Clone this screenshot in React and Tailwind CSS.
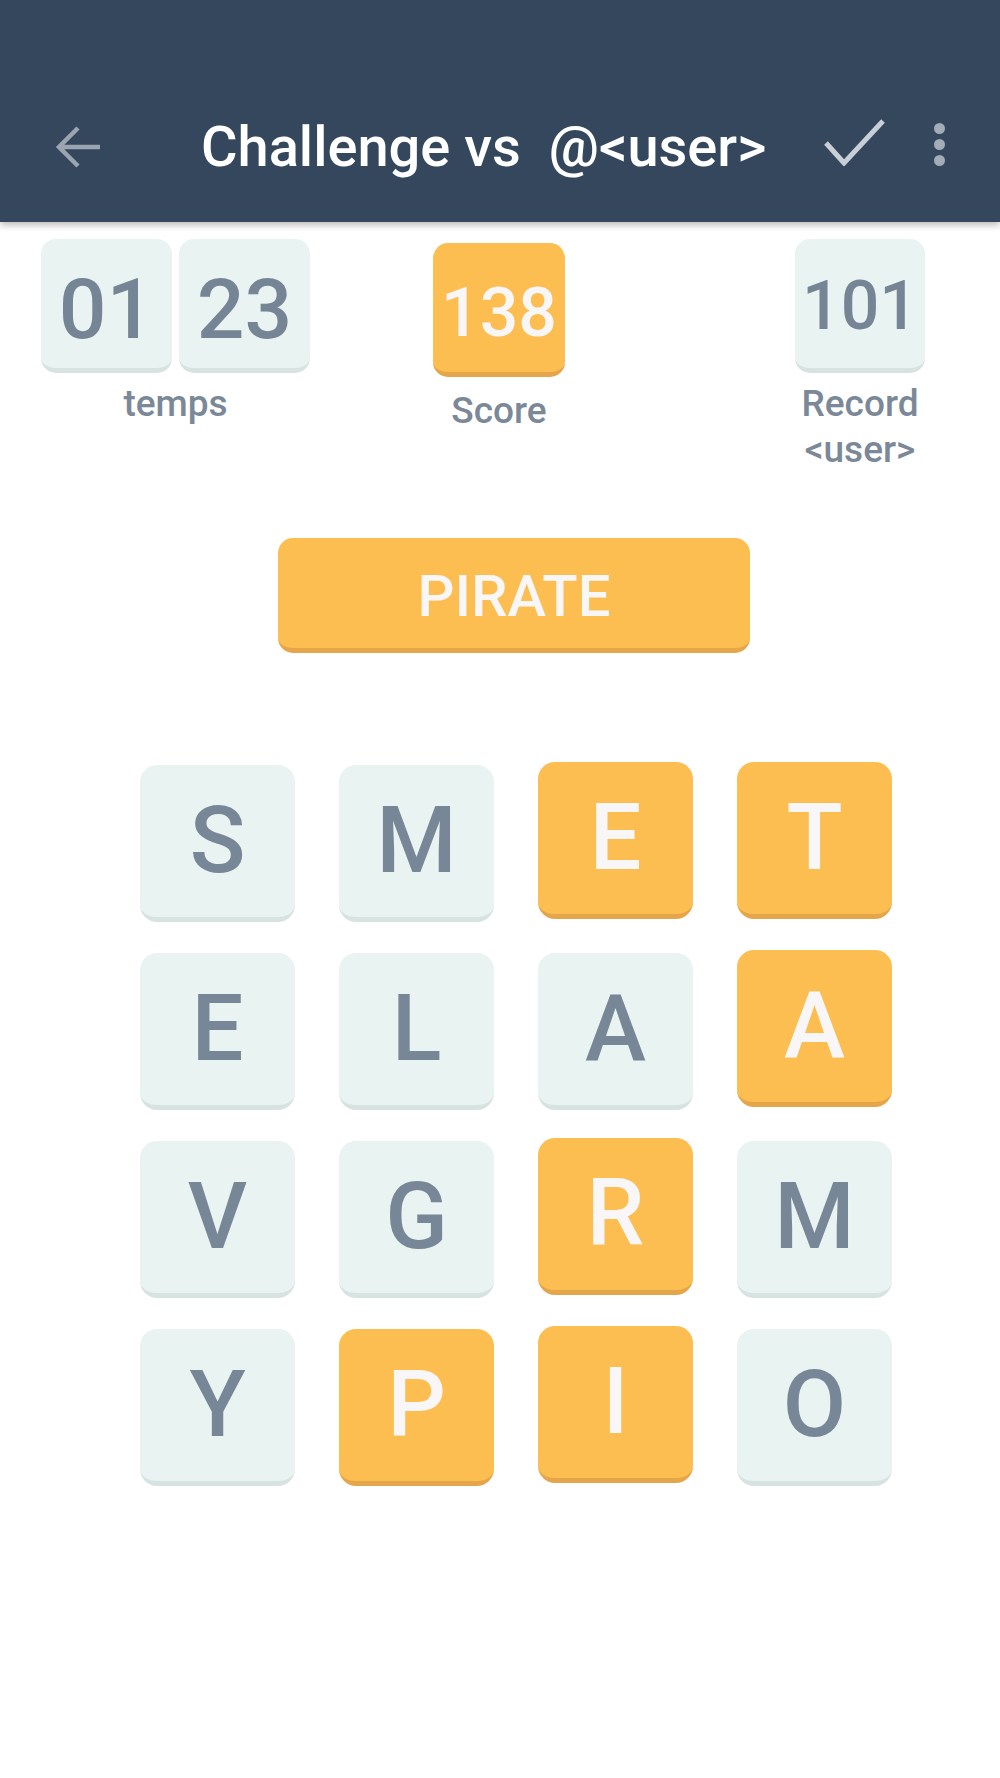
import React from 'react';

const tiles = [
  { l: 'S' }, { l: 'M' }, { l: 'E', on: true, up: true }, { l: 'T', on: true, up: true },
  { l: 'E' }, { l: 'L' }, { l: 'A' }, { l: 'A', on: true, up: true },
  { l: 'V' }, { l: 'G' }, { l: 'R', on: true, up: true }, { l: 'M' },
  { l: 'Y' }, { l: 'P', on: true }, { l: 'I', on: true, up: true }, { l: 'O' },
];

function Tile({ l, on, up }) {
  const color = on
    ? 'bg-[#fdbe51] border-[#e5a54a] text-[#f8f6f6]'
    : 'bg-[#e9f3f1] border-[#d7e3e0] text-[#778797]';
  return (
    <div
      className={`h-[157px] rounded-[17px] border-b-[5px] flex items-center justify-center text-[92px] font-medium leading-none ${color} ${up ? '-translate-y-[3px]' : ''}`}
    >
      {l}
    </div>
  );
}

export default function App() {
  return (
    <div className="min-h-[1778px] bg-white font-['Roboto',sans-serif]">
      {/* Top bar */}
      <header className="relative z-10 h-[222px] bg-[#34475d] flex flex-col justify-end shadow-[0_3px_7px_rgba(0,0,0,0.28)]">
        <div className="h-[150px] flex items-center">
          <svg className="ml-[55px] shrink-0" width="46" height="46" viewBox="0 0 46 46" fill="none">
            <path d="M45 23H5M23 4L4 23l19 19" stroke="#9aa5b1" strokeWidth="4.5" />
          </svg>
          <h1 className="ml-[100px] text-[56px] font-medium text-white whitespace-pre leading-none">
            Challenge vs  @&lt;user&gt;
          </h1>
          <svg className="ml-auto shrink-0 -translate-y-[5px]" width="62" height="48" viewBox="0 0 62 48" fill="none">
            <path d="M3 25l18 20L60 3" stroke="#c9cfd6" strokeWidth="5" />
          </svg>
          <div className="ml-[49px] mr-[55px] flex flex-col gap-[5px] -translate-y-[3px]">
            <span className="w-[11px] h-[11px] rounded-full bg-[#a3acb7]" />
            <span className="w-[11px] h-[11px] rounded-full bg-[#a3acb7]" />
            <span className="w-[11px] h-[11px] rounded-full bg-[#a3acb7]" />
          </div>
        </div>
      </header>

      {/* Stats */}
      <div className="flex items-start pt-[17px] pl-[41px] text-[#7b8898] font-medium">
        <div className="w-[269px] flex flex-col items-center">
          <div className="flex gap-[7px]">
            {['01', '23'].map((n) => (
              <div key={n} className="w-[131px] h-[134px] rounded-[15px] bg-[#e9f3f1] border-b-[5px] border-[#d7e3e0] flex items-center justify-center pt-[13px] text-[84px] leading-none text-[#768596]">
                {n}
              </div>
            ))}
          </div>
          <p className="mt-[8px] text-[37px] leading-[46px]">temps</p>
        </div>

        <div className="ml-[123px] w-[132px] mt-[4px] flex flex-col items-center">
          <div className="w-[132px] h-[134px] rounded-[15px] bg-[#fdbe51] border-b-[5px] border-[#e5a54a] flex items-center justify-center pt-[10px] text-[68px] leading-none text-[#f8f6f6]">
            138
          </div>
          <p className="mt-[11px] text-[37px] leading-[46px]">Score</p>
        </div>

        <div className="ml-[230px] w-[130px] flex flex-col items-center">
          <div className="w-[130px] h-[134px] rounded-[15px] bg-[#e9f3f1] border-b-[5px] border-[#d7e3e0] flex items-center justify-center pt-[5px] text-[68px] leading-none text-[#768596]">
            101
          </div>
          <p className="mt-[8px] text-[37px] leading-[46px] text-center">
            Record
            <br />
            &lt;user&gt;
          </p>
        </div>
      </div>

      {/* Current word */}
      <div className="ml-[278px] mt-[65px] w-[472px] h-[115px] rounded-[15px] bg-[#fdbe51] border-b-[5px] border-[#e5a54a] flex items-center justify-center pt-[6px] text-[58px] font-medium leading-none text-[#f8f6f6]">
        PIRATE
      </div>

      {/* Letter grid */}
      <div className="ml-[140px] mt-[112px] grid grid-cols-[repeat(4,155px)] gap-x-[44px] gap-y-[31px]">
        {tiles.map((t, i) => (
          <Tile key={i} {...t} />
        ))}
      </div>
    </div>
  );
}
